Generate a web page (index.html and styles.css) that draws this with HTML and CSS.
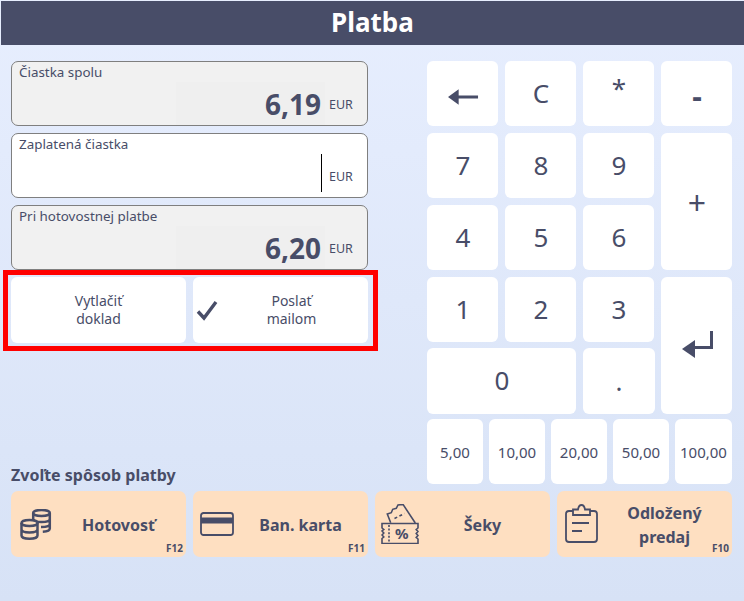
FILE: index.html
```html
<!DOCTYPE html>
<html lang="sk">
<head>
<meta charset="utf-8">
<title>Platba</title>
<link rel="stylesheet" href="styles.css">
</head>
<body>
<header class="title">Platba</header>
<main class="main">
  <div class="top">
    <section class="left">
      <div class="field grey">
        <div class="label">Čiastka spolu</div>
        <div class="row"><div class="value">6,19</div><div class="cur">EUR</div></div>
      </div>
      <div class="field">
        <div class="label">Zaplatená čiastka</div>
        <div class="row"><div class="value plain"><span class="caret"></span></div><div class="cur">EUR</div></div>
      </div>
      <div class="field grey">
        <div class="label">Pri hotovostnej platbe</div>
        <div class="row"><div class="value">6,20</div><div class="cur">EUR</div></div>
      </div>
      <div class="opts">
        <button class="opt">Vytlačiť<br>doklad</button>
        <button class="opt mail">
          <svg class="check" viewBox="0 0 22 22"><path d="M2 12.5l6 6.5L20 3" fill="none" stroke="#484d68" stroke-width="3.4"/></svg>
          Poslať<br>mailom
        </button>
      </div>
      <div class="redbox"></div>
    </section>
    <section class="right">
      <div class="keys">
        <button class="key"><svg class="arrow" viewBox="0 0 32 16"><path d="M0 8L11 0v6.500h20v3H11V16z" fill="#484d68"/></svg></button>
        <button class="key">C</button>
        <button class="key star">*</button>
        <button class="key minus">-</button>
        <button class="key">7</button>
        <button class="key">8</button>
        <button class="key">9</button>
        <button class="key tall plus">+</button>
        <button class="key">4</button>
        <button class="key">5</button>
        <button class="key">6</button>
        <button class="key">1</button>
        <button class="key">2</button>
        <button class="key">3</button>
        <button class="key tall enter"><svg class="ret" viewBox="0 0 31 28"><path d="M29.500 0v16.500H12" fill="none" stroke="#484d68" stroke-width="3"/><path d="M0 18L13 9v18z" fill="#484d68"/></svg></button>
        <button class="key wide up">0</button>
        <button class="key up dot">.</button>
      </div>
      <div class="money">
        <button class="coin">5,00</button>
        <button class="coin">10,00</button>
        <button class="coin">20,00</button>
        <button class="coin">50,00</button>
        <button class="coin">100,00</button>
      </div>
    </section>
  </div>
  <h2 class="choose">Zvoľte spôsob platby</h2>
  <div class="pay">
    <button class="method">
      <svg class="ico" viewBox="0 0 32 32" fill="none" stroke="#484d68" stroke-width="2.500">
        <ellipse cx="21.500" cy="4" rx="8.300" ry="3"/>
        <path d="M13.200 4v7M29.800 4v15.500c0 1.800-3 3-7 3.200M13.200 10c.5 2 4 3 8.300 3s8.300-1 8.300-3M21 18c5 0 8.800-1 8.800-3"/>
        <ellipse cx="9.500" cy="14" rx="8" ry="3" fill="#fedfc1"/>
        <path d="M1.500 14v12.500c0 2 3.500 3.300 8 3.300s8-1.300 8-3.300V14M1.500 20.300c0 2 3.500 3.200 8 3.200s8-1.200 8-3.200"/>
      </svg>
      <span class="mname">Hotovosť</span><span class="fkey">F12</span>
    </button>
    <button class="method">
      <svg class="ico card" viewBox="0 0 34 24"><rect x="1" y="1" width="32" height="22" rx="2.500" fill="none" stroke="#484d68" stroke-width="1.800"/><rect x="1" y="5.500" width="32" height="6" fill="#484d68"/></svg>
      <span class="mname">Ban. karta</span><span class="fkey">F11</span>
    </button>
    <button class="method">
      <svg class="ico ticket" viewBox="0 0 38 40" fill="none" stroke="#484d68" stroke-width="1.600">
        <path d="M9.700 18.700L6.300 10l4-1.300 1.400-3.400 3.600-1L17 1l5-.6L34.300 19"/>
        <path d="M13.500 14.500l10-5" stroke-dasharray="3 2.500"/>
        <path d="M1 19.500h36v4.500l-1.800 1.500 1.800 2-1.800 2 1.800 2-1.800 2 1.800 1.500v4.500H1V34.500l1.800-1.500-1.800-2 1.800-2-1.800-2 1.800-1.500L1 24z"/>
        <path d="M8 21v18" stroke-dasharray="2 1.600"/>
      </svg>
      <span class="pct">%</span>
      <span class="mname">Šeky</span>
    </button>
    <button class="method">
      <svg class="ico clip" viewBox="0 0 33 39" fill="none" stroke="#484d68" stroke-width="1.800">
        <path d="M8 7H4a3 3 0 0 0-3 3v25a3 3 0 0 0 3 3h25a3 3 0 0 0 3-3V10a3 3 0 0 0-3-3h-4"/>
        <path d="M8 11V5.500h5C13.500 2.500 15 1 16.500 1S19.500 2.500 20 5.500h5V11z"/>
        <path d="M7 19h17M7 27h10"/>
      </svg>
      <span class="mname">Odložený<br>predaj</span><span class="fkey">F10</span>
    </button>
  </div>
</main>
</body>
</html>
```
FILE: styles.css
```css
* { box-sizing: border-box; }
html, body { height: 100%; }
body {
  margin: 0;
  padding: 1px 0 0 1px;
  font-family: "Noto Sans", "Open Sans", sans-serif;
  color: #484d68;
  background: linear-gradient(#e7eefe, #d7e2f6);
  overflow: hidden;
}
button {
  font: inherit;
  color: inherit;
  border: 0;
  padding: 0;
  background: #fff;
  border-radius: 6px;
}
.title {
  height: 44px;
  background: #484d68;
  color: #fff;
  font-size: 26px;
  font-weight: 700;
  line-height: 42px;
  text-align: center;
}
.main { padding: 16px 12px 0 10px; }
.top { display: flex; justify-content: space-between; height: 424px; }
.left { width: 357px; position: relative; display: flex; flex-direction: column; gap: 7px; }
.field {
  height: 65px;
  border: 1px solid #7f7f7f;
  border-radius: 7px;
  background: #fff;
  display: flex;
  flex-direction: column;
  justify-content: space-between;
  overflow: hidden;
}
.field.grey { background: #f1f1f1; }
.label { font-size: 13.400px; line-height: 18px; padding: 1px 0 0 7px; }
.row { display: flex; justify-content: flex-end; height: 43px; }
.value {
  width: 149px;
  background: #efefef;
  text-align: right;
  font-size: 28px;
  font-weight: 700;
  line-height: 45px;
  padding-right: 4px;
}
.value.plain { background: none; position: relative; }
.caret {
  position: absolute;
  right: 3px;
  top: 0;
  width: 1px;
  height: 38px;
  background: #000;
}
.cur { width: 42px; padding: 14px 0 0 4px; font-size: 12.500px; line-height: 18px; }
.opts { display: flex; gap: 7px; }
.opt {
  flex: 0 0 175px;
  height: 66px;
  font-size: 14px;
  line-height: 18px;
  position: relative;
}
.mail { padding-left: 22px; }
.check { position: absolute; left: 3px; top: 22px; width: 22px; height: 22px; }
.redbox {
  position: absolute;
  left: -8px;
  top: 209px;
  width: 375px;
  height: 81px;
  border: 5px solid #ff0000;
}
.right { width: 305px; }
.keys {
  display: grid;
  grid-template-columns: repeat(4, 71px);
  grid-template-rows: repeat(5, 65px);
  gap: 7px;
}
.key { font-size: 26px; line-height: 30px; padding: 0 0 2px 1px; }
.tall { grid-row: span 2; grid-column: 4; }
.wide { grid-column: span 2; }
.up { margin-top: -1px; }
.enter { grid-row: 4 / span 2; }
.dot { width: 72px; padding: 0; }
.star { padding-bottom: 12px; }
.minus { padding: 4px 0 0 1px; font-size: 30px; font-weight: 700; }
.plus { font-size: 32px; padding: 2px 0 0 1px; }
.arrow { display: block; width: 31px; height: 16px; margin: 8px auto 0 20px; }
.ret { display: block; width: 31px; height: 28px; margin: 0 auto 0 20px; }
.money { display: flex; gap: 6px; margin-top: 5px; }
.coin { width: 56px; height: 65px; font-size: 15px; }
.coin:last-child { width: 57px; }
.choose { margin: -20px 0 0; font-size: 16px; font-weight: 700; line-height: 20px; }
.pay { display: grid; grid-template-columns: repeat(4, 175px); gap: 7px; margin-top: 6px; }
.method {
  height: 66px;
  background: #fedfc1;
  border-radius: 7px;
  font-size: 16px;
  font-weight: 700;
  line-height: 24px;
  position: relative;
  padding: 1px 0 0 40px;
}
.mname { display: block; }
.fkey { position: absolute; right: 3px; bottom: 3px; font-size: 10px; line-height: 12px; }
.ico { position: absolute; left: 9px; top: 18px; width: 32px; height: 32px; }
.card { left: 7px; top: 21px; width: 34px; height: 24px; }
.ticket { left: 6px; top: 13px; width: 38px; height: 40px; }
.clip { left: 8px; top: 13px; width: 33px; height: 39px; }
.pct { position: absolute; left: 20px; top: 33px; font-size: 15px; line-height: 18px; }
```
